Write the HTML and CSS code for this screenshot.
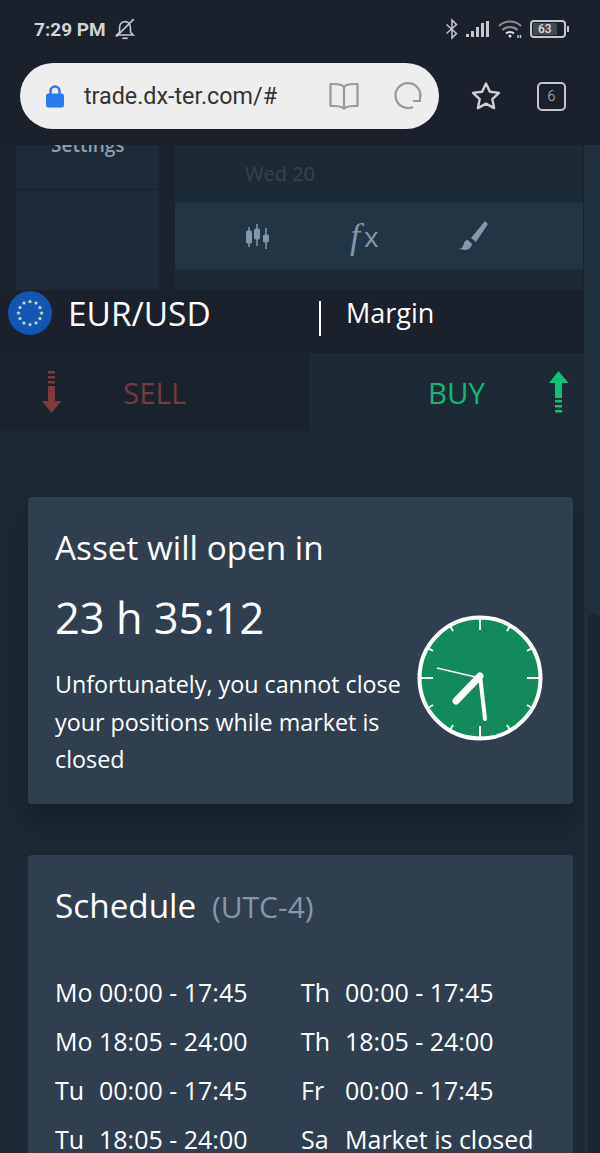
FILE: index.html
```html
<!DOCTYPE html>
<html lang="en">
<head>
  <meta charset="UTF-8" />
  <meta name="viewport" content="width=device-width, initial-scale=1.0" />
  <title>trade.dx-ter.com</title>
  <link rel="stylesheet" href="styles.css">
</head>
<body>

  <header class="chrome">
    <div class="status-bar">
      <div class="status-left">
        <span class="time">7:29 PM</span>
        <svg class="bell" width="24" height="24" viewBox="0 0 22 22" fill="none" stroke="#c4c7cb" stroke-width="1.500">
          <path d="M3.500 16.500h15l-2.500-2.500v-4c0-3.400-2-5.800-5-5.800S6 6.600 6 10v4z" />
          <path d="M8.500 19.500h5" />
          <path d="M3 18L19 2" />
        </svg>
      </div>
      <div class="status-right">
        <svg width="14" height="22" viewBox="0 0 14 22" fill="none" stroke="#c4c7cb" stroke-width="1.500">
          <path d="M1.500 6.500l10 9-4.500 4.500v-18l4.500 4.500-10 9" />
        </svg>
        <svg class="signal" width="24" height="18" viewBox="0 0 24 18" fill="#c4c7cb">
          <rect x="0" y="14" width="3" height="3" />
          <rect x="5" y="11" width="3" height="6" />
          <rect x="10" y="7" width="3" height="10" />
          <rect x="15" y="3" width="3" height="14" />
          <rect x="20" y="1" width="3" height="16" />
        </svg>
        <svg class="wifi" width="26" height="20" viewBox="0 0 26 20" fill="none" stroke="#8d9094" stroke-width="2">
          <path d="M2 7c6-6 16-6 22 0" />
          <path d="M5.500 11c4-4 11-4 15 0" />
          <path d="M9 14.500c2-2 6-2 8 0" stroke="#e0e0e0" />
          <circle cx="13" cy="17" r="1.500" fill="#e0e0e0" stroke="none" />
          <path d="M21 19v-3M23.500 19v-3" stroke-width="1.500" stroke="#c4c7cb" />
        </svg>
        <div class="battery">
          <div class="battery-body"><span class="battery-level">63</span></div>
          <div class="battery-tip"></div>
        </div>
      </div>
    </div>
    <div class="browser-bar">
      <div class="url-pill">
        <svg class="lock" width="20" height="26" viewBox="0 0 20 26">
          <path d="M5.500 12V8a4.500 4.500 0 0 1 9 0v4" fill="none" stroke="#2979f2" stroke-width="2.500" />
          <rect x="1" y="10.500" width="18" height="14" rx="2.500" fill="#2979f2" />
        </svg>
        <span class="url">trade.dx-ter.com/#</span>
        <svg class="book" width="32" height="32" viewBox="0 0 32 32" fill="none" stroke="#999" stroke-width="2.200" stroke-linejoin="round">
          <path d="M16 7c-2-2-5-3-9-3H2.500v22H8c3.500 0 6 1 8 2.500 2-1.500 4.500-2.500 8-2.500h5.500V4H25c-4 0-7 1-9 3z" />
          <path d="M16 7v21" />
        </svg>
        <svg class="reload" width="30" height="30" viewBox="0 0 30 30" fill="none" stroke="#999" stroke-width="2.200">
          <path d="M20 26a12.500 12.500 0 1 1 7-8" />
          <path d="M27 12.500v7.500h-7" stroke-width="2" />
        </svg>
      </div>
      <svg class="star" width="32" height="32" viewBox="0 0 32 32" fill="none" stroke="#cfd0d2" stroke-width="2.400" stroke-linejoin="round">
        <path d="M16 3.500l3.900 8.300 9.100 1.100-6.700 6.200 1.800 9L16 23.600l-8.100 4.500 1.800-9-6.700-6.200 9.100-1.100z" />
      </svg>
      <div class="tabs-count">6</div>
    </div>
  </header>

  <div class="page">
    <div class="chart-behind">
      <div class="side-menu">
        <div class="side-item"><span class="side-label">Settings</span></div>
      </div>
      <div class="chart-area">
        <div class="chart-date">Wed 20</div>
        <div class="chart-tools">
          <svg width="28" height="26" viewBox="0 0 28 26" fill="#8297a8" stroke="#8297a8">
            <path d="M5 4v20M13 1v22M22 5v21" stroke-width="1.500" />
            <rect x="2.500" y="8" width="5" height="12" rx="1" />
            <rect x="10.500" y="6" width="5" height="10" rx="1" />
            <rect x="19.500" y="12" width="5" height="7" rx="1" />
          </svg>
          <span class="fx"><i class="fx-f">f</i><span class="fx-x">x</span></span>
          <svg width="34" height="34" viewBox="0 0 34 34" fill="#8297a8">
            <path d="M30 2l-14 17 5 4L33 5z" />
            <path d="M13 21c-4 0-4 4-5 6-.5 1.500-2 2.500-4 3 4 1.500 12 2 13-5z" />
          </svg>
        </div>
      </div>
    </div>

    <div class="instrument">
      <svg class="flag" width="44" height="44" viewBox="0 0 44 44">
        <defs>
          <path id="eu-star" d="M0-2.200l.6 1.500 1.600.1-1.200 1 .4 1.600L0 1.100l-1.400.9.400-1.600-1.200-1 1.600-.1z" />
        </defs>
        <circle cx="22" cy="22" r="22" fill="#1256b4" />
        <g fill="#dfe3c4">
          <use href="#eu-star" x="22" y="10.500" />
          <use href="#eu-star" x="28" y="12" />
          <use href="#eu-star" x="32" y="16.500" />
          <use href="#eu-star" x="33.500" y="22" />
          <use href="#eu-star" x="32" y="27.500" />
          <use href="#eu-star" x="28" y="32" />
          <use href="#eu-star" x="22" y="33.500" />
          <use href="#eu-star" x="16" y="32" />
          <use href="#eu-star" x="12" y="27.500" />
          <use href="#eu-star" x="10.500" y="22" />
          <use href="#eu-star" x="12" y="16.500" />
          <use href="#eu-star" x="16" y="12" />
        </g>
      </svg>
      <span class="pair">EUR/USD</span>
      <span class="divider"></span>
      <span class="mode">Margin</span>
    </div>

    <div class="trade-tabs">
      <div class="tab tab-sell">
        <svg width="20" height="42" viewBox="0 0 20 42" fill="#7c3a3a">
          <rect x="6" y="0" width="7" height="2.500" />
          <rect x="6" y="5" width="7" height="2.500" />
          <rect x="6" y="10" width="7" height="2.500" />
          <path d="M6 15h7v15h6.500L9.500 42 0 30h6z" />
        </svg>
        <span class="tab-label">SELL</span>
      </div>
      <div class="tab tab-buy">
        <span class="tab-label">BUY</span>
        <svg width="20" height="42" viewBox="0 0 20 42" fill="#11c177">
          <path d="M6 27h7V12h6.500L9.500 0 0 12h6z" />
          <rect x="6" y="29" width="7" height="2.500" />
          <rect x="6" y="34" width="7" height="2.500" />
          <rect x="6" y="39" width="7" height="2.500" />
        </svg>
      </div>
    </div>

    <main class="content">
      <section class="card card-open">
        <div class="open-text">
          <h2 class="card-title">Asset will open in</h2>
          <div class="countdown">23 h 35:12</div>
          <p class="note">Unfortunately, you cannot close your positions while market is closed</p>
        </div>
        <svg class="clock" width="126" height="126" viewBox="0 0 126 126">
          <circle cx="63" cy="63" r="60.500" fill="#128a5b" stroke="#fff" stroke-width="4" />
          <g stroke="#fff" stroke-width="2">
            <path d="M63 3v12M63 111v12M3 63h13M110 63h13" />
            <path d="M93 11l-3 5M33 11l3 5M115 33l-5 3M11 33l5 3M115 93l-5-3M11 93l5-3M93 115l-3-5M33 115l3-5" />
          </g>
          <path d="M63 63L20 53" stroke="#fff" stroke-width="1.500" />
          <path d="M63 61l-24 25" stroke="#fff" stroke-width="7" stroke-linecap="round" />
          <path d="M63 60l5 44" stroke="#fff" stroke-width="4" stroke-linecap="round" />
        </svg>
      </section>

      <section class="card card-schedule">
        <h2 class="card-title">Schedule <span class="utc">(UTC-4)</span></h2>
        <div class="schedule-grid">
          <div class="slot"><span class="day">Mo</span><span>00:00 - 17:45</span></div>
          <div class="slot"><span class="day">Th</span><span>00:00 - 17:45</span></div>
          <div class="slot"><span class="day">Mo</span><span>18:05 - 24:00</span></div>
          <div class="slot"><span class="day">Th</span><span>18:05 - 24:00</span></div>
          <div class="slot"><span class="day">Tu</span><span>00:00 - 17:45</span></div>
          <div class="slot"><span class="day">Fr</span><span>00:00 - 17:45</span></div>
          <div class="slot"><span class="day">Tu</span><span>18:05 - 24:00</span></div>
          <div class="slot"><span class="day">Sa</span><span>Market is closed</span></div>
        </div>
      </section>
    </main>

    <div class="scroll-strip"><div class="scroll-thumb"></div></div>
  </div>

</body>
</html>
```

FILE: styles.css
```css
* {
  box-sizing: border-box;
}
html, body {
  margin: 0;
  padding: 0;
  height: 100%;
  overflow: hidden;
}
body {
  font-family: 'Open Sans', sans-serif;
  background-color: #1b2a35;
  color: #fff;
  width: 600px;
  height: 1153px;
}
.chrome {
  background-color: #1a202c;
  height: 145px;
  padding: 0 20px;
}
.status-bar {
  height: 63px;
  display: flex;
  align-items: center;
  justify-content: space-between;
  padding: 0 11px 5px 14px;
  color: #d2d4d6;
}
.status-left {
  display: flex;
  align-items: center;
  gap: 7px;
}
.time {
  font-family: 'Roboto', sans-serif;
  font-weight: 700;
  font-size: 19px;
}
.status-right {
  display: flex;
  align-items: center;
  gap: 7px;
}
.battery {
  display: flex;
  align-items: center;
  gap: 1px;
}
.battery-body {
  width: 36px;
  height: 18px;
  border: 2px solid #c4c7cb;
  border-radius: 4px;
  padding: 1px;
  display: flex;
}
.battery-level {
  width: 24px;
  background-color: #444a52;
  border-radius: 1px;
  color: #ddd;
  font-family: 'Roboto', sans-serif;
  font-size: 12px;
  font-weight: 500;
  line-height: 12px;
  padding-left: 5px;
}
.battery-tip {
  width: 2px;
  height: 6px;
  background-color: #c4c7cb;
}
.browser-bar {
  display: flex;
  align-items: center;
}
.url-pill {
  width: 419px;
  height: 66px;
  background-color: #eeeeee;
  border-radius: 33px;
  display: flex;
  align-items: center;
  padding-left: 25px;
  color: #333;
}
.url {
  font-family: 'Roboto', sans-serif;
  font-size: 23.300px;
  margin-left: 19px;
  width: 245px;
}
.book {
  margin-left: -1px;
}
.reload {
  margin-left: 33px;
}
.star {
  margin-left: 31px;
}
.tabs-count {
  width: 29px;
  height: 29px;
  margin-left: 35px;
  border: 2px solid #c4c6c9;
  border-radius: 5px;
  color: #c4c6c9;
  font-family: 'Roboto', sans-serif;
  font-weight: 300;
  font-size: 14px;
  display: flex;
  align-items: center;
  justify-content: center;
}
.page {
  position: relative;
  height: 1008px;
  overflow: hidden;
}
.chart-behind {
  height: 145px;
  display: flex;
  gap: 16px;
  background-color: #1a222d;
  padding-left: 16px;
  padding-right: 17px;
}
.side-menu {
  width: 143px;
  background-color: #1c2b37;
}
.side-item {
  height: 45px;
  border-bottom: 1px solid #172029;
  position: relative;
  overflow: hidden;
}
.side-label {
  position: absolute;
  left: 35px;
  top: -13px;
  color: #8d9fae;
  font-size: 19px;
  font-weight: 600;
}
.chart-area {
  flex: 1;
  background-color: #1c2a35;
}
.chart-date {
  height: 58px;
  padding: 15px 0 0 70px;
  color: #344552;
  font-size: 20px;
}
.chart-tools {
  height: 66px;
  background-color: #223545;
  display: flex;
  align-items: center;
  padding-left: 69px;
  color: #8297a8;
}
.fx {
  display: flex;
  align-items: center;
  width: 60px;
  margin: 0 45px 0 78px;
}
.fx-f {
  font-family: 'Liberation Serif', serif;
  font-size: 36px;
  line-height: 36px;
  margin-right: 4px;
}
.fx-x {
  font-size: 28px;
  line-height: 28px;
}
.instrument {
  height: 63px;
  background-color: #1a202c;
  margin-right: 16px;
  display: flex;
  align-items: center;
  padding: 0 0 17px 8px;
}
.pair {
  font-size: 33.400px;
  margin-left: 16px;
  width: 251px;
}
.divider {
  width: 2px;
  height: 35px;
  background-color: #fff;
  margin-top: 10px;
}
.mode {
  font-size: 27px;
  margin-left: 25px;
  margin-bottom: 2px;
}
.trade-tabs {
  height: 78px;
  display: flex;
  margin-right: 16px;
}
.tab {
  flex: 1;
  display: flex;
  align-items: center;
  font-size: 29.500px;
}
.tab-sell {
  width: 309px;
  flex: none;
  background-color: #1a222d;
  color: #763b3c;
  padding-left: 42px;
}
.tab-sell .tab-label {
  margin-left: 61px;
}
.tab-buy {
  background-color: #1c2a35;
  border-radius: 6px 0 0 0;
  color: #11b974;
  justify-content: flex-end;
  padding-right: 15px;
}
.tab-buy .tab-label {
  margin-right: 64px;
}
.content {
  padding: 66px 27px 0 28px;
}
.card {
  background-color: #2f3f50;
  border-radius: 4px;
}
.card-open {
  height: 307px;
  padding: 27px 27px;
  display: flex;
  box-shadow: 0 18px 30px rgba(15, 22, 28, 0.5);
  margin-bottom: 51px;
  position: relative;
}
.open-text {
  width: 352px;
}
.card-title {
  margin: 0;
  font-size: 33.300px;
  font-weight: 400;
  line-height: 46px;
}
.countdown {
  font-size: 43.400px;
  line-height: 58px;
  margin-top: 19px;
}
.note {
  margin: 19px 0 0;
  font-size: 23.300px;
  line-height: 37.500px;
}
.clock {
  position: absolute;
  left: 389px;
  top: 118px;
}
.card-schedule {
  height: 340px;
  padding: 27px 27px;
}
.utc {
  color: #8697a8;
  font-size: 30px;
  margin-left: 7px;
}
.schedule-grid {
  display: grid;
  grid-template-columns: 246px 1fr;
  grid-auto-rows: 49px;
  margin-top: 38px;
  font-size: 25px;
  line-height: 49px;
}
.slot {
  display: flex;
}
.day {
  width: 44px;
}
.scroll-strip {
  position: absolute;
  right: 0;
  top: 0;
  bottom: 0;
  width: 16px;
  background-color: #1f303c;
}
.scroll-thumb {
  position: absolute;
  top: 468px;
  bottom: 0;
  left: 4px;
  right: 0;
  background-color: #1a2732;
  border-radius: 8px 8px 0 0;
}
```
